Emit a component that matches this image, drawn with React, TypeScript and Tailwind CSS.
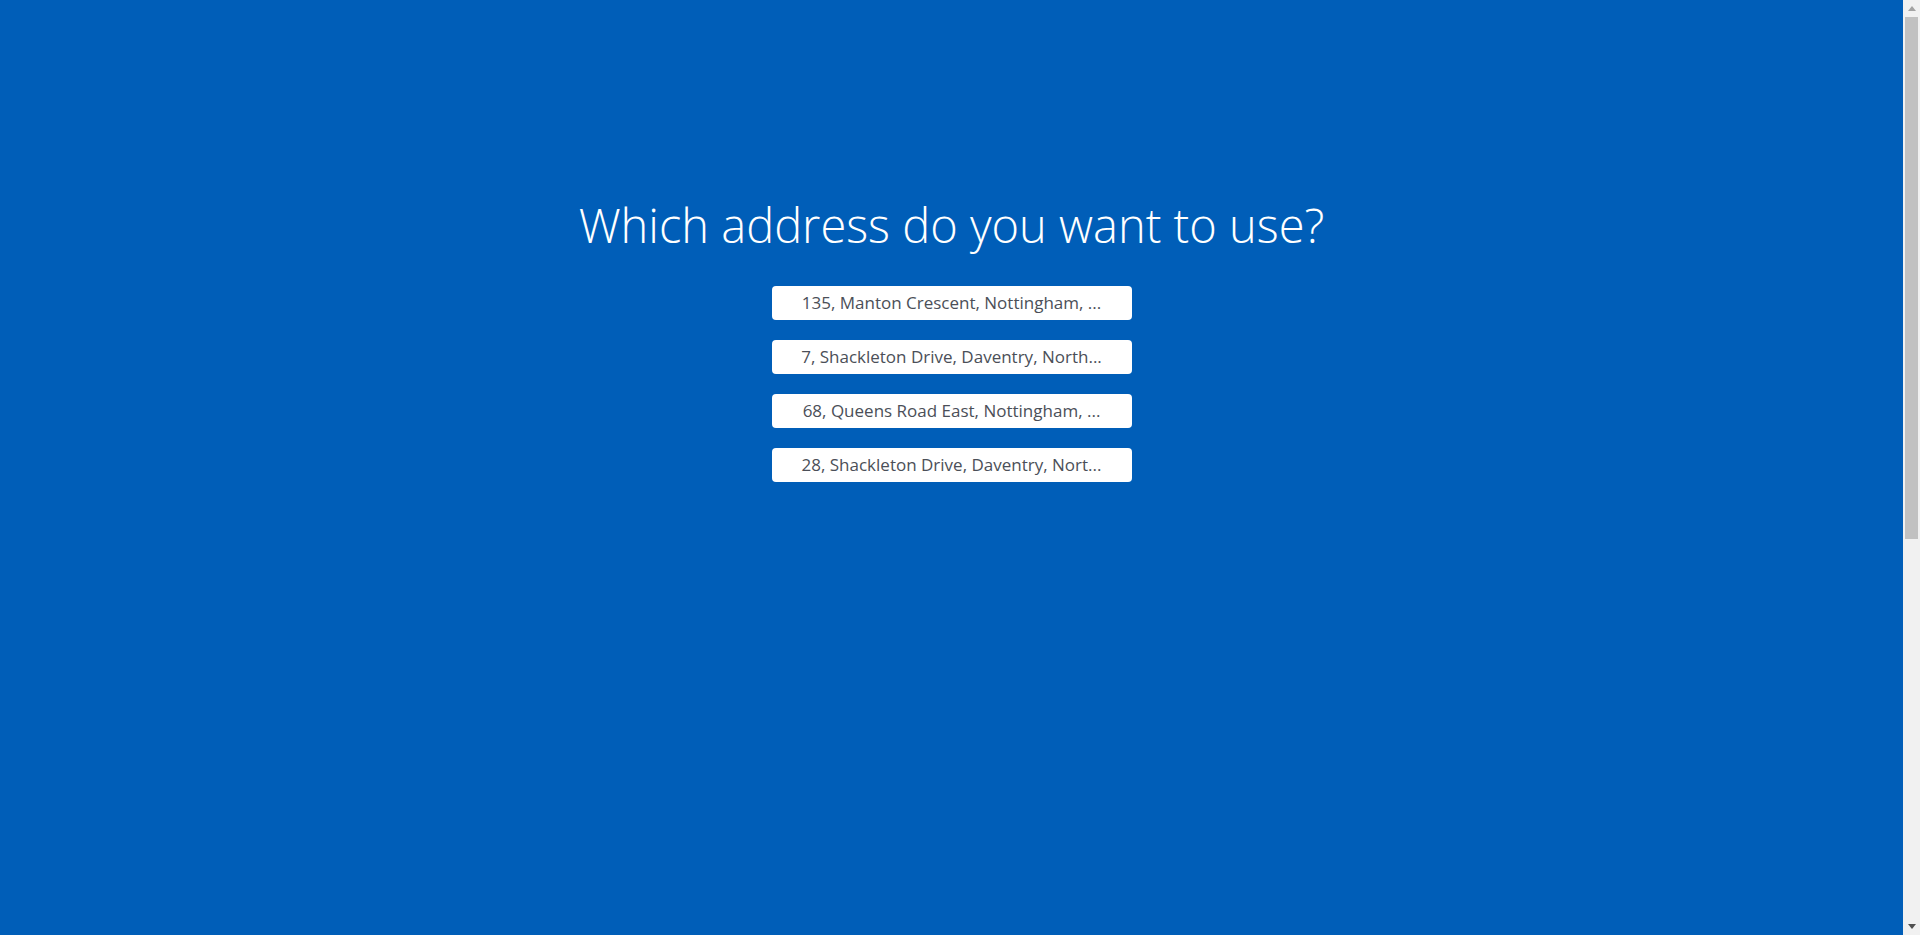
const addresses = [
  "135, Manton Crescent, Nottingham, ...",
  "7, Shackleton Drive, Daventry, North...",
  "68, Queens Road East, Nottingham, ...",
  "28, Shackleton Drive, Daventry, Nort...",
];

function Scrollbar() {
  return (
    <div className="flex h-[935px] w-[17px] shrink-0 flex-col bg-[#f1f1f1]">
      <div className="flex h-[17px] items-center justify-center">
        <svg width="8" height="5" viewBox="0 0 8 5">
          <path d="M4 0 L8 5 L0 5 Z" fill="#a3a3a3" />
        </svg>
      </div>
      <div className="flex-1 px-[2px]">
        <div className="h-[522px] bg-[#c1c1c1]" />
      </div>
      <div className="flex h-[17px] items-center justify-center">
        <svg width="8" height="5" viewBox="0 0 8 5">
          <path d="M0 0 L8 0 L4 5 Z" fill="#505050" />
        </svg>
      </div>
    </div>
  );
}

export default function App() {
  return (
    <div className="flex h-[935px] overflow-hidden">
      <main
        className="flex min-h-[1614px] flex-1 flex-col items-center bg-[#005eb8] pt-[197px]"
        style={{ fontFamily: '"Open Sans", "Liberation Sans", sans-serif' }}
      >
        <h1 className="text-[47px] font-light leading-[56px] text-white">
          Which address do you want to use?
        </h1>
        <div className="mt-[33px] flex flex-col gap-5">
          {addresses.map((a) => (
            <button
              key={a}
              type="button"
              className="flex h-[34px] w-[360px] items-center justify-center rounded-[4px] bg-white text-[17px] text-[#4b4f58]"
            >
              {a}
            </button>
          ))}
        </div>
      </main>
      <Scrollbar />
    </div>
  );
}
